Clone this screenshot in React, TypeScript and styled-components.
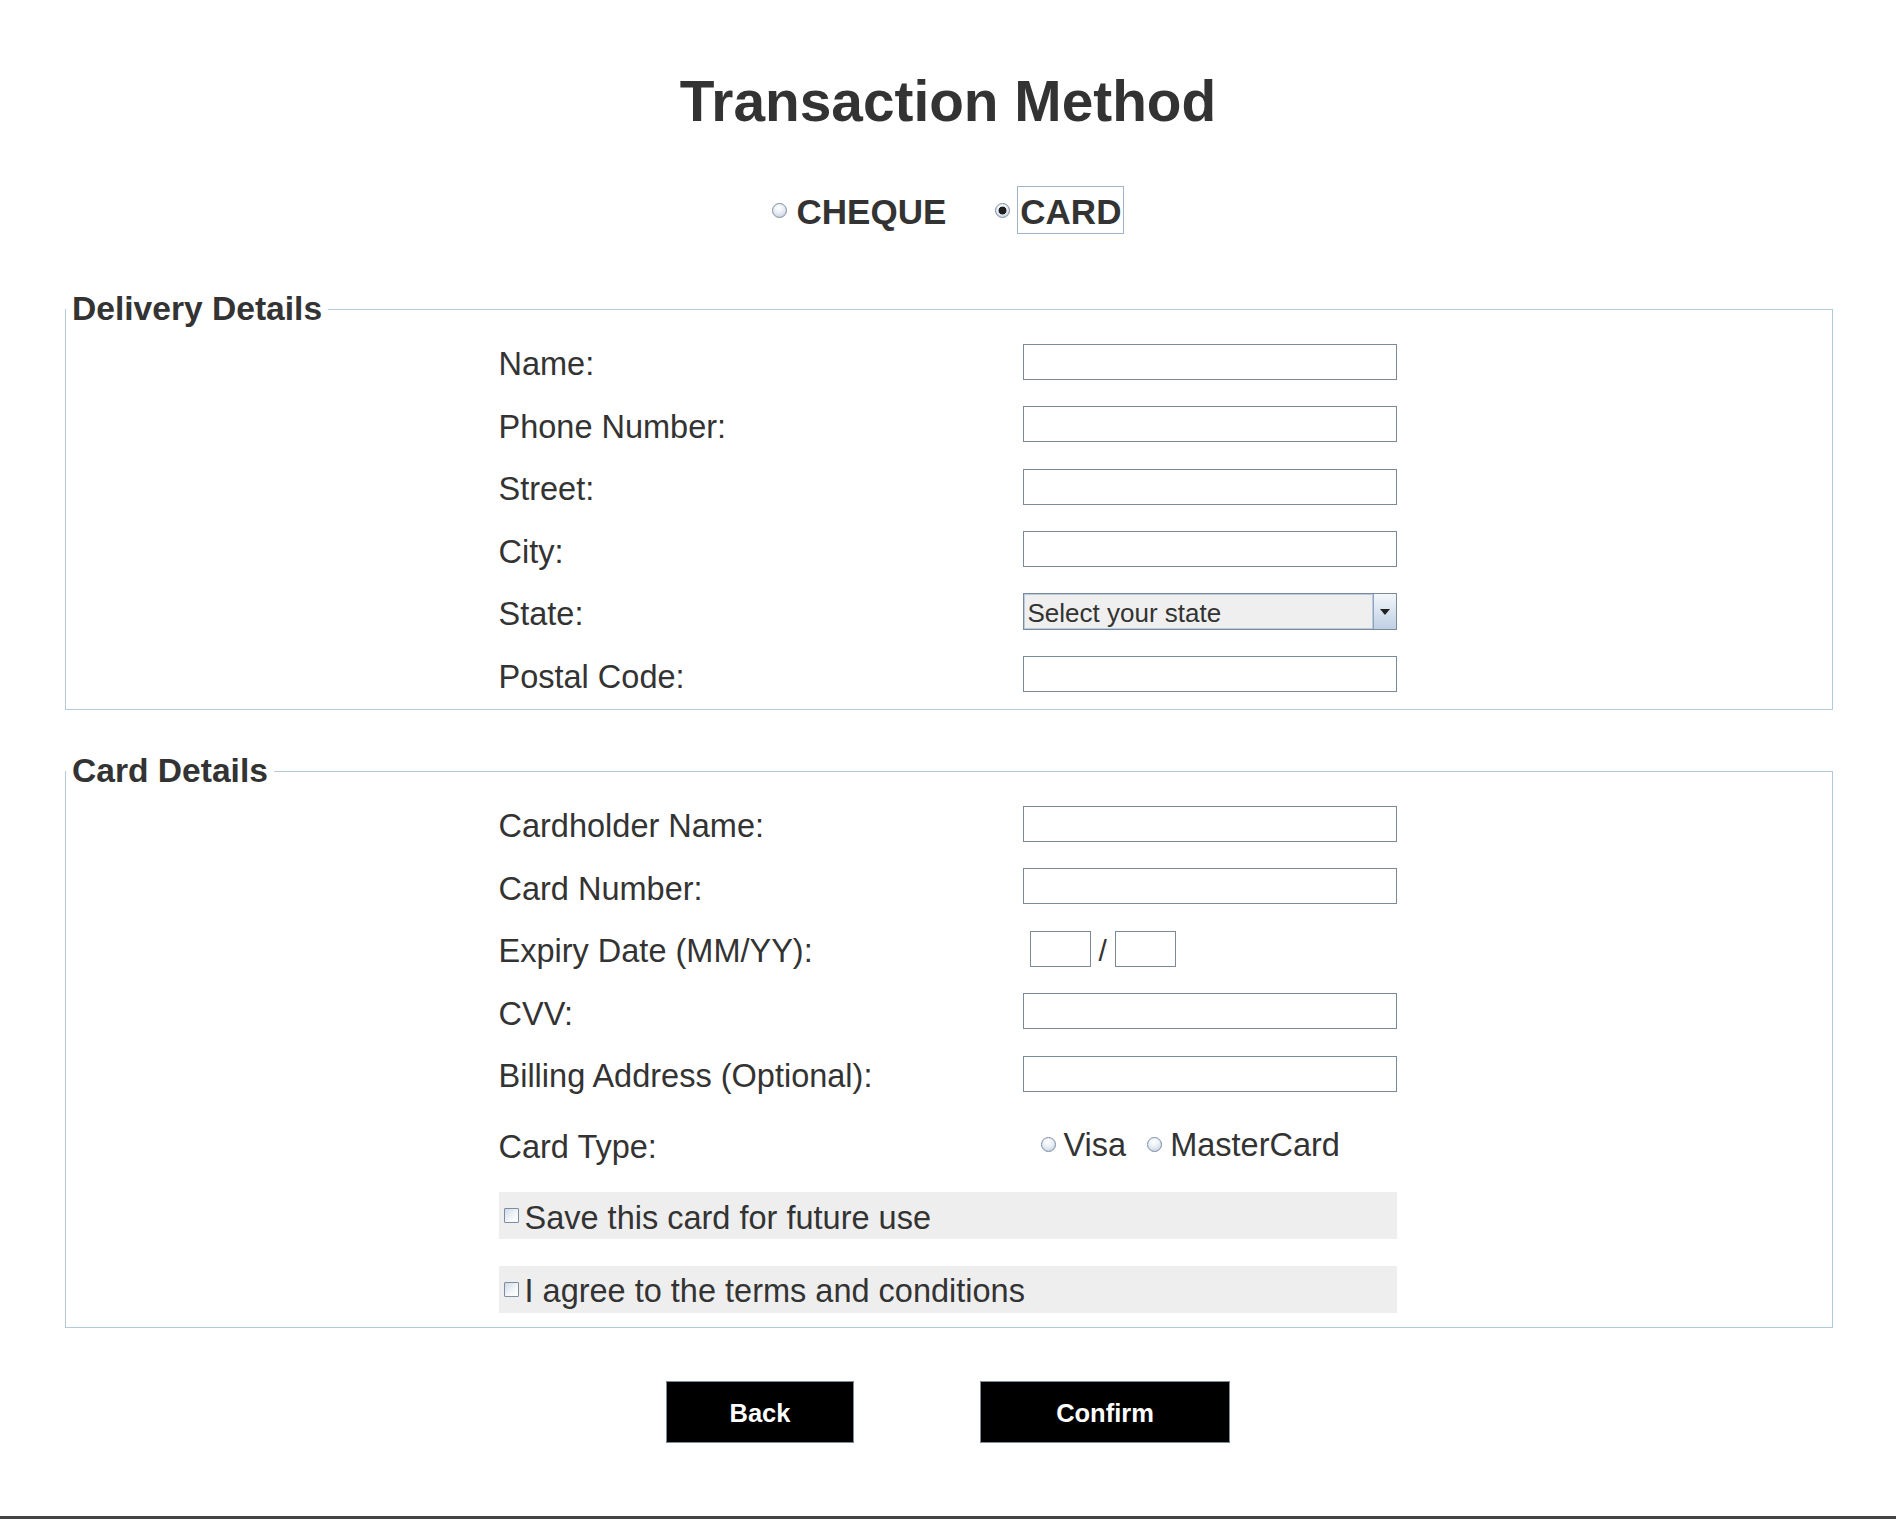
import React from "react";
import styled, { createGlobalStyle, css } from "styled-components";

const GlobalStyle = createGlobalStyle`
  html, body {
    margin: 0;
    padding: 0;
    background: #ffffff;
  }
  body {
    font-family: "Liberation Sans", Arial, sans-serif;
    color: #333333;
  }
  * { box-sizing: border-box; }
`;

const Page = styled.div`
  width: 1896px;
  padding-top: 70px;
  display: flex;
  flex-direction: column;
`;

const Title = styled.h1`
  margin: 0;
  height: 64px;
  line-height: 64px;
  text-align: center;
  font-family: "Liberation Sans", Arial, sans-serif;
  font-weight: 700;
  font-size: 56.8px;
  color: #333333;
`;

const MethodRow = styled.div`
  margin-top: 52px;
  height: 48px;
  display: flex;
  justify-content: center;
  align-items: center;
  gap: 46px;
`;

const MethodOption = styled.label`
  display: flex;
  align-items: center;
  gap: 7px;
  cursor: pointer;
`;

const radioLook = css`
  appearance: none;
  -webkit-appearance: none;
  margin: 0;
  width: 15px;
  height: 15px;
  border-radius: 50%;
  border: 1px solid #7d8da2;
  background: radial-gradient(circle at 45% 30%, #ffffff 0%, #e9eef5 45%, #b9c6d6 100%);
  flex: 0 0 auto;
  &:checked {
    background: radial-gradient(circle at 50% 50%, #1e1e1e 0 3.6px, transparent 4.3px),
      radial-gradient(circle at 45% 30%, #ffffff 0%, #e9eef5 45%, #b9c6d6 100%);
  }
`;

const Radio = styled.input.attrs({ type: "radio" })`
  ${radioLook}
`;

const MethodText = styled.span<{ $active?: boolean }>`
  display: block;
  padding: 5px 2px 1px;
  line-height: 40px;
  height: 48px;
  border: 1px solid ${(p) => (p.$active ? "#9fb3cb" : "transparent")};
  font-family: "Liberation Sans", Arial, sans-serif;
  font-weight: 700;
  font-size: 35px;
  color: #333333;
`;

const Section = styled.fieldset<{ $top: number; $bottom: number }>`
  margin: ${(p) => p.$top}px 63px 0 65px;
  padding: 0 3px ${(p) => p.$bottom}px 0;
  border: 1px solid #b3c9de;
  min-width: 0;
`;

const Legend = styled.legend`
  margin-left: 0;
  padding: 0 6px;
  height: 40px;
  line-height: 40px;
  font-family: "Liberation Sans", Arial, sans-serif;
  font-weight: 700;
  font-size: 33.6px;
  color: #333333;
`;

const FormGrid = styled.div`
  width: 898px;
  margin: 1.5px auto 0;
  display: flex;
  flex-direction: column;
`;

const FieldRow = styled.div<{ $h?: number }>`
  display: grid;
  grid-template-columns: 524px 374px;
  align-items: center;
  height: ${(p) => p.$h ?? 62.5}px;
`;

const FieldLabel = styled.label`
  padding-top: 5px;
  font-family: "Liberation Sans", Arial, sans-serif;
  font-size: 32.5px;
  color: #333333;
  line-height: 38px;
  white-space: nowrap;
`;

const TextInput = styled.input.attrs({ type: "text" })<{ $w?: number }>`
  width: ${(p) => p.$w ?? 374}px;
  height: 36px;
  margin: 0;
  padding: 0 4px;
  border: 1px solid #7b8a99;
  border-radius: 0;
  background: #ffffff;
  font-family: "Liberation Sans", Arial, sans-serif;
  font-size: 24px;
  color: #333;
  outline: none;
`;

const SelectBox = styled.div`
  width: 374px;
  height: 37px;
  display: flex;
  border: 1px solid #7b8a99;
  background: #efefef;
`;

const SelectField = styled.select`
  flex: 1 1 auto;
  min-width: 0;
  appearance: none;
  -webkit-appearance: none;
  margin: 0;
  height: 100%;
  padding: 2px 0 0 3px;
  border: 1px solid #b9cbe0;
  border-radius: 0;
  background: #efefef;
  font-family: "Liberation Sans", Arial, sans-serif;
  font-size: 26px;
  color: #333333;
  outline: none;
`;

const SelectArrow = styled.span`
  flex: 0 0 23px;
  display: flex;
  align-items: center;
  justify-content: center;
  border-left: 1px solid #8ea3bd;
  background: linear-gradient(#f4f7fb, #d6e1ee 55%, #bfcfe3);
  &::after {
    content: "";
    width: 0;
    height: 0;
    border-left: 5px solid transparent;
    border-right: 5px solid transparent;
    border-top: 6px solid #222222;
  }
`;

const ExpiryGroup = styled.div`
  display: flex;
  align-items: center;
  gap: 8px;
  padding-left: 7px;
`;

const Slash = styled.span`
  padding-top: 4px;
  font-family: "Liberation Sans", Arial, sans-serif;
  font-size: 30px;
  color: #333;
`;

const CardTypes = styled.div`
  display: flex;
  align-items: center;
  padding-left: 18px;
  gap: 21px;
`;

const CardTypeOption = styled.label`
  display: flex;
  align-items: center;
  gap: 8px;
  font-family: "Liberation Sans", Arial, sans-serif;
  font-size: 32.5px;
  color: #333333;
  line-height: 38px;
  cursor: pointer;
  & > span {
    padding-top: 1px;
  }
`;

const CheckBar = styled.label<{ $top: number; $h: number }>`
  display: flex;
  align-items: center;
  gap: 6px;
  margin-top: ${(p) => p.$top}px;
  height: ${(p) => p.$h}px;
  padding-left: 5px;
  background: #eeeeee;
  font-family: "Liberation Sans", Arial, sans-serif;
  font-size: 32.5px;
  color: #333333;
  cursor: pointer;
  & > span {
    padding-top: 5px;
  }
`;

const Checkbox = styled.input.attrs({ type: "checkbox" })`
  appearance: none;
  -webkit-appearance: none;
  margin: 0;
  width: 15px;
  height: 15px;
  border: 1px solid #7d8da2;
  border-radius: 1px;
  background: linear-gradient(135deg, #cfd9e5, #f4f7fa 60%, #ffffff);
  flex: 0 0 auto;
`;

const ButtonRow = styled.div`
  margin-top: 53px;
  display: flex;
  justify-content: center;
  gap: 126px;
`;

const ActionButton = styled.button<{ $w: number }>`
  width: ${(p) => p.$w}px;
  height: 62px;
  margin: 0;
  padding: 2px 0 0;
  background: #000000;
  color: #ffffff;
  border: 1px solid #7d8a98;
  font-family: "Liberation Sans", Arial, sans-serif;
  font-weight: 700;
  font-size: 25.5px;
  cursor: pointer;
`;

const BottomRule = styled.div`
  margin-top: 73px;
  height: 3px;
  background: #444444;
`;

const deliveryFields = ["Name:", "Phone Number:", "Street:", "City:"];

export default function App() {
  return (
    <>
      <GlobalStyle />
      <Page>
        <Title>Transaction Method</Title>
        <MethodRow>
          <MethodOption>
            <Radio name="method" value="cheque" />
            <MethodText>CHEQUE</MethodText>
          </MethodOption>
          <MethodOption>
            <Radio name="method" value="card" defaultChecked />
            <MethodText $active>CARD</MethodText>
          </MethodOption>
        </MethodRow>

        <Section $top={55} $bottom={3}>
          <Legend>Delivery Details</Legend>
          <FormGrid>
            {deliveryFields.map((f) => (
              <FieldRow key={f}>
                <FieldLabel>{f}</FieldLabel>
                <TextInput />
              </FieldRow>
            ))}
            <FieldRow>
              <FieldLabel>State:</FieldLabel>
              <SelectBox>
                <SelectField defaultValue="">
                  <option value="">Select your state</option>
                  <option>Johor</option>
                  <option>Kedah</option>
                  <option>Selangor</option>
                </SelectField>
                <SelectArrow />
              </SelectBox>
            </FieldRow>
            <FieldRow>
              <FieldLabel>Postal Code:</FieldLabel>
              <TextInput />
            </FieldRow>
          </FormGrid>
        </Section>

        <Section $top={41.5} $bottom={14.5}>
          <Legend>Card Details</Legend>
          <FormGrid>
            <FieldRow>
              <FieldLabel>Cardholder Name:</FieldLabel>
              <TextInput />
            </FieldRow>
            <FieldRow>
              <FieldLabel>Card Number:</FieldLabel>
              <TextInput />
            </FieldRow>
            <FieldRow>
              <FieldLabel>Expiry Date (MM/YY):</FieldLabel>
              <ExpiryGroup>
                <TextInput $w={61} />
                <Slash>/</Slash>
                <TextInput $w={61} />
              </ExpiryGroup>
            </FieldRow>
            <FieldRow>
              <FieldLabel>CVV:</FieldLabel>
              <TextInput />
            </FieldRow>
            <FieldRow>
              <FieldLabel>Billing Address (Optional):</FieldLabel>
              <TextInput />
            </FieldRow>
            <FieldRow $h={78.5}>
              <FieldLabel>Card Type:</FieldLabel>
              <CardTypes>
                <CardTypeOption>
                  <Radio name="cardType" value="visa" />
                  <span>Visa</span>
                </CardTypeOption>
                <CardTypeOption>
                  <Radio name="cardType" value="mastercard" />
                  <span>MasterCard</span>
                </CardTypeOption>
              </CardTypes>
            </FieldRow>
            <CheckBar $top={8.5} $h={47}>
              <Checkbox />
              <span>Save this card for future use</span>
            </CheckBar>
            <CheckBar $top={27} $h={46.5}>
              <Checkbox />
              <span>I agree to the terms and conditions</span>
            </CheckBar>
          </FormGrid>
        </Section>

        <ButtonRow>
          <ActionButton $w={188}>Back</ActionButton>
          <ActionButton $w={250}>Confirm</ActionButton>
        </ButtonRow>
        <BottomRule />
      </Page>
    </>
  );
}
